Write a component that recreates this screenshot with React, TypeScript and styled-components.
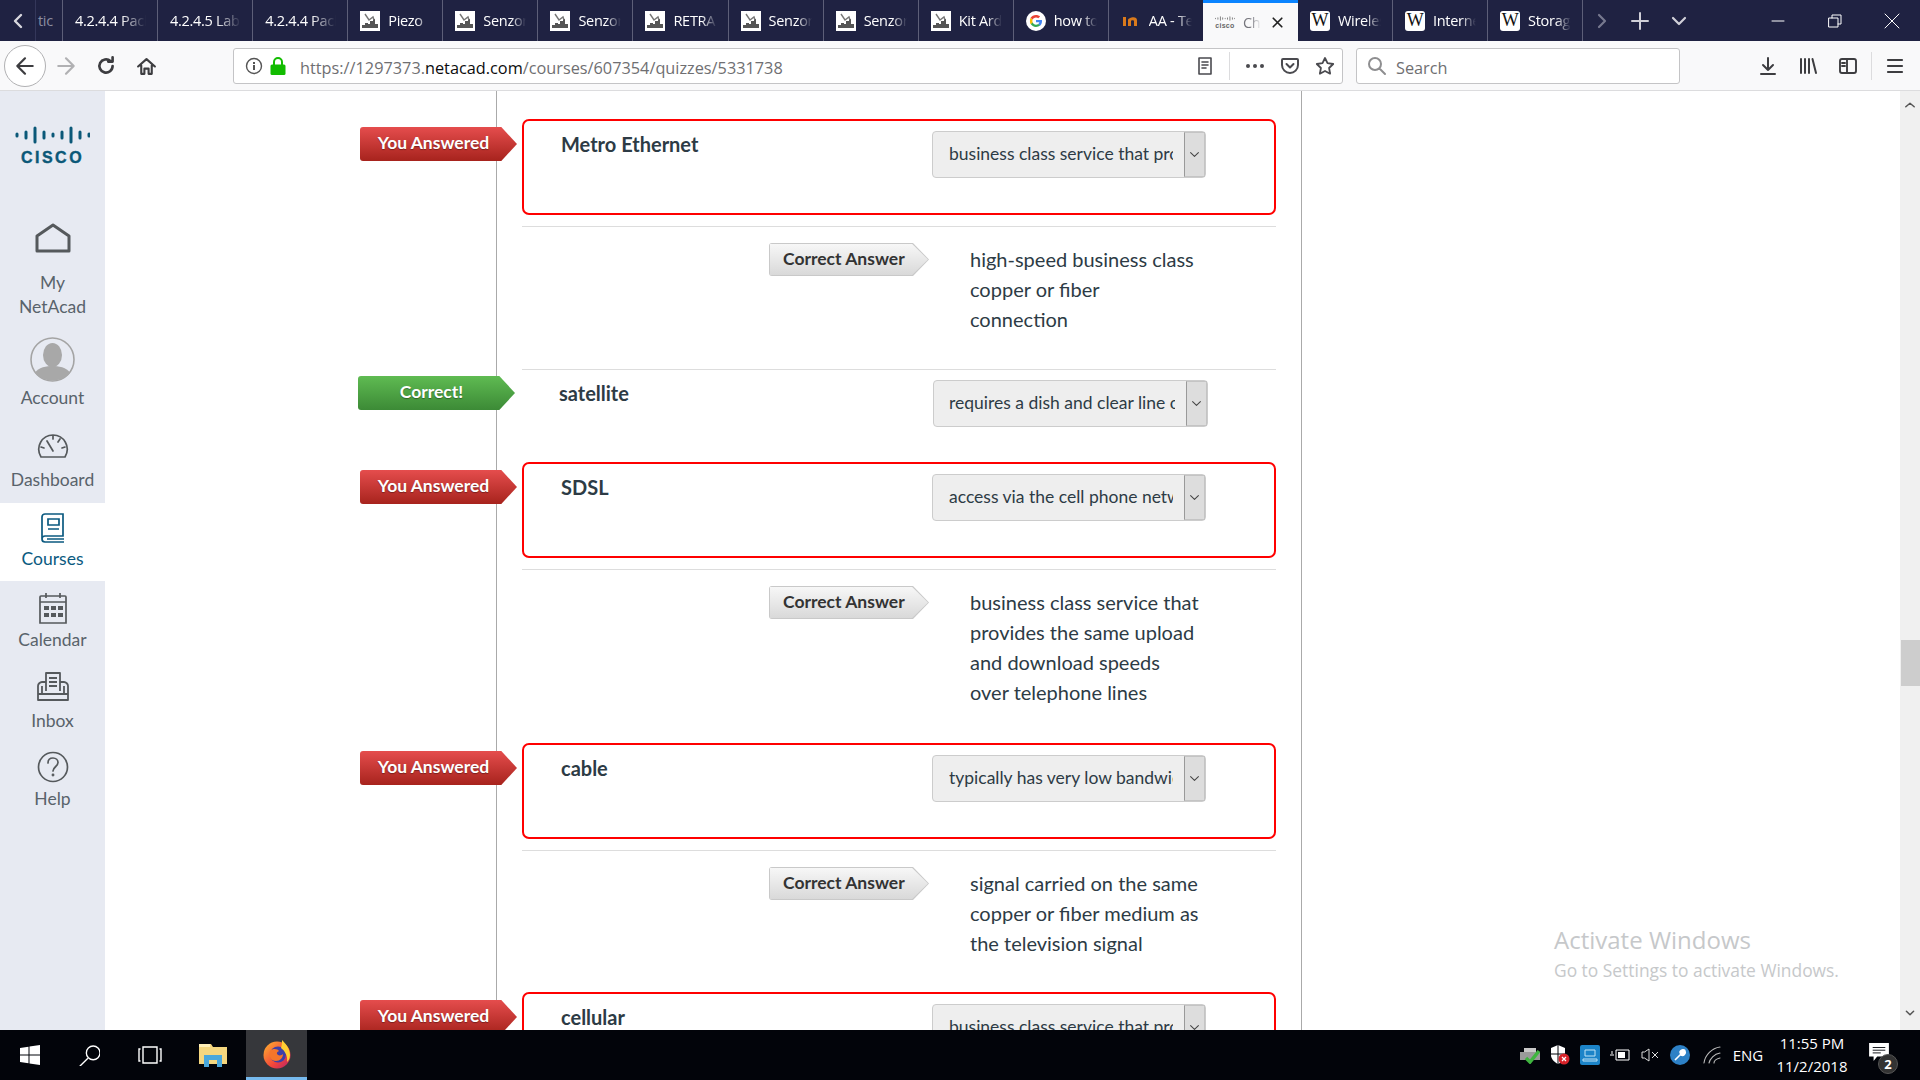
import React from 'react'
import styled, { createGlobalStyle } from 'styled-components'

const GlobalStyle = createGlobalStyle`
  html, body {
    margin: 0;
    padding: 0;
    background: #fff;
    overflow: hidden;
  }
  * {
    box-sizing: border-box;
  }
`

const Screen = styled.div`
  width: 1920px;
  height: 1080px;
  display: flex;
  flex-direction: column;
  overflow: hidden;
  font-family: Lato, 'Open Sans', sans-serif;
`

/* ---------- tab strip ---------- */

const TabStrip = styled.div`
  height: 41px;
  flex: none;
  display: flex;
  background: #1f2242;
  color: #fff;
  font-family: 'Open Sans', 'Noto Sans', sans-serif;
  font-size: 14.5px;
  letter-spacing: -0.3px;
`

const StripButton = styled.div<{ $w: number }>`
  width: ${(p) => p.$w}px;
  flex: none;
  display: flex;
  align-items: center;
  justify-content: center;
`

const PartialTab = styled.div`
  width: 28px;
  flex: none;
  display: flex;
  align-items: center;
  padding-left: 2px;
  overflow: hidden;
  border-right: 1px solid #5d5f78;
  border-left: 1px solid #34375a;
  color: #8b8da0;
`

const Tab = styled.div`
  width: 95.08px;
  flex: none;
  display: flex;
  align-items: center;
  gap: 8px;
  padding-left: 12px;
  padding-right: 11px;
  border-right: 1px solid #5d5f78;
  overflow: hidden;
`

const TabTitle = styled.span`
  flex: 1;
  min-width: 0;
  white-space: nowrap;
  overflow: hidden;
  -webkit-mask-image: linear-gradient(to right, #000 65%, transparent 100%);
  mask-image: linear-gradient(to right, #000 65%, transparent 100%);
`

const ActiveTab = styled.div`
  width: 95px;
  flex: none;
  display: flex;
  align-items: center;
  gap: 8px;
  padding: 0 12px;
  margin-left: -1px;
  background: #f9f9fa;
  border-top: 3px solid #0a84ff;
  color: #75757c;
`

const ActiveTitle = styled.span`
  width: 20px;
  white-space: nowrap;
  overflow: hidden;
  -webkit-mask-image: linear-gradient(to right, #000 40%, transparent 100%);
  mask-image: linear-gradient(to right, #000 40%, transparent 100%);
`

const WindowControls = styled.div`
  margin-left: auto;
  display: flex;
`

const FaviconBox = styled.span`
  width: 20px;
  height: 20px;
  flex: none;
  display: flex;
  flex-direction: column;
  align-items: center;
  justify-content: center;
`

const WikiBox = styled(FaviconBox)`
  background: #fff;
  border-radius: 3px;
  color: #111;
  font-family: 'Liberation Serif', serif;
  font-size: 18px;
`

const TinyCisco = styled.span`
  font-family: 'Liberation Sans', sans-serif;
  font-size: 7px;
  font-weight: 700;
  line-height: 8px;
  letter-spacing: 0.3px;
  color: #666;
`

/* ---------- toolbar ---------- */

const Toolbar = styled.div`
  height: 50px;
  flex: none;
  display: flex;
  align-items: center;
  padding: 1px 0 0 4px;
  background: #f9f9fa;
  border-bottom: 1px solid #dcdcde;
  font-family: 'Open Sans', 'Noto Sans', sans-serif;
`

const BackButton = styled.div`
  width: 42px;
  height: 42px;
  flex: none;
  display: flex;
  align-items: center;
  justify-content: center;
  background: #fff;
  border: 1px solid #b1b1b3;
  border-radius: 50%;
`

const ToolButton = styled.div`
  width: 40px;
  height: 40px;
  flex: none;
  display: flex;
  align-items: center;
  justify-content: center;
`

const Field = styled.div`
  height: 36px;
  flex: none;
  display: flex;
  align-items: center;
  background: #fff;
  border: 1px solid #c4c4c6;
  border-radius: 3px;
  font-size: 16.3px;
  color: #6f6f72;
`

const UrlBar = styled(Field)`
  width: 1110px;
  margin-left: 67px;
  padding-left: 11px;
`

const SearchBar = styled(Field)`
  width: 324px;
  margin-left: 13px;
  padding-left: 10px;
  gap: 9px;
`

const SearchLabel = styled.span`
  margin-top: 3px;
`

const UrlText = styled.span`
  margin: 3px 0 0 14px;
  white-space: nowrap;
  b {
    font-weight: 400;
    color: #0c0c0d;
  }
`

const UrlActions = styled.div`
  margin-left: auto;
  display: flex;
  align-items: center;
  height: 100%;
`

const UrlAction = styled.div`
  width: 35px;
  height: 100%;
  display: flex;
  align-items: center;
  justify-content: center;
`

const ToolSeparator = styled.div<{ $gap: number }>`
  width: 1px;
  height: 28px;
  flex: none;
  margin: 0 ${(p) => p.$gap}px;
  background: #dcdcde;
`

const ToolSpacer = styled.div`
  width: 68px;
  flex: none;
`

/* ---------- sidebar ---------- */

const Body = styled.div`
  flex: 1;
  min-height: 0;
  display: flex;
`

const Sidebar = styled.nav`
  width: 105px;
  flex: none;
  display: flex;
  flex-direction: column;
  background: #e7eaf2;
  color: #59636b;
  font-size: 17.5px;
  line-height: 24px;
  text-align: center;
`

const LogoBlock = styled.div`
  height: 124px;
  flex: none;
  display: flex;
  flex-direction: column;
  align-items: center;
  padding-top: 33px;
`

const LogoWord = styled.div`
  margin-top: 6px;
  font-family: 'Liberation Sans', sans-serif;
  font-weight: 700;
  font-size: 16px;
  line-height: 12px;
  letter-spacing: 2.5px;
  -webkit-text-stroke: 0.4px #0b5878;
  color: #0b5878;
`

const NavItem = styled.div<{ $h: number; $top: number; $active?: boolean }>`
  height: ${(p) => p.$h}px;
  flex: none;
  display: flex;
  flex-direction: column;
  align-items: center;
  padding-top: ${(p) => p.$top}px;
  background: ${(p) => (p.$active ? '#fff' : 'transparent')};
  color: ${(p) => (p.$active ? '#0b5a80' : 'inherit')};
`

const NavLabel = styled.div<{ $gap: number }>`
  margin-top: ${(p) => p.$gap}px;
`

/* ---------- quiz ---------- */

const Content = styled.main`
  flex: 1;
  min-width: 0;
  position: relative;
  overflow: hidden;
  background: #fff;
`

const QuizColumn = styled.div`
  width: 806px;
  min-height: 100%;
  margin-left: 391px;
  padding: 28px 25px 0;
  border-left: 1px solid #aaa;
  border-right: 1px solid #aaa;
  color: #2d3b45;
`

const WrongBox = styled.div`
  position: relative;
  height: 96px;
  display: flex;
  align-items: flex-start;
  border: 2px solid #f00;
  border-radius: 7px;
  background: #fff;
`

const RightBox = styled.div`
  position: relative;
  height: 93px;
  display: flex;
  align-items: flex-start;
  border-top: 1px solid #ddd;
`

const AnswerLabel = styled.div<{ $w: number }>`
  width: ${(p) => p.$w}px;
  flex: none;
  padding: 11px 0 0 37px;
  font-size: 20px;
  font-weight: 700;
  line-height: 24px;
`

const Select = styled.div<{ $w: number }>`
  width: ${(p) => p.$w}px;
  height: 47px;
  margin-top: 10px;
  flex: none;
  display: flex;
  background: #eee;
  border: 1px solid #ccc;
  border-radius: 4px;
  font-size: 17.5px;
`

const SelectText = styled.div<{ $left: number }>`
  flex: 1;
  min-width: 0;
  margin: 0 11px 0 ${(p) => p.$left}px;
  overflow: hidden;
  white-space: nowrap;
  line-height: 43px;
`

const SelectArrow = styled.div`
  width: 21px;
  flex: none;
  display: flex;
  align-items: center;
  justify-content: center;
  background: #ddd;
  border: 1px solid #c4c4c4;
  border-left-color: #999;
`

const Badge = styled.div`
  position: absolute;
  top: 6px;
  left: -164px;
  width: 157px;
  height: 34px;
  padding: 0 10px 4px 0;
  display: flex;
  align-items: center;
  justify-content: center;
  clip-path: polygon(0 0, 90% 0, 100% 50%, 90% 100%, 0 100%);
  border-radius: 3px 0 0 3px;
  color: #fff;
  font-size: 17.5px;
  font-weight: 700;
  text-shadow: 0 1px 1px rgba(0, 0, 0, 0.35);
`

const WrongBadge = styled(Badge)`
  background: linear-gradient(#e54d4d, #a7231d);
`

const RightBadge = styled(Badge)`
  background: linear-gradient(#5fbb52, #3c8a36);
`

const CorrectRow = styled.div<{ $h: number }>`
  height: ${(p) => p.$h}px;
  margin-top: 11px;
  display: flex;
  align-items: flex-start;
  padding: 16px 0 0 247px;
  border-top: 1px solid #ddd;
`

const AnswerTag = styled.div`
  position: relative;
  width: 160px;
  height: 33px;
  flex: none;
  padding: 0 0 3px 14px;
  display: flex;
  align-items: center;
  clip-path: polygon(0 0, 90% 0, 100% 50%, 90% 100%, 0 100%);
  background: #c9c9c9;
  border-radius: 3px 0 0 3px;
  color: #333;
  font-size: 17.5px;
  font-weight: 700;
  &::before {
    content: '';
    position: absolute;
    inset: 1px;
    clip-path: polygon(0 0, 90% 0, 100% 50%, 90% 100%, 0 100%);
    background: linear-gradient(#f7f7f7, #d9d9d9);
  }
  span {
    position: relative;
  }
`

const AnswerText = styled.div`
  margin: 1px 0 0 41px;
  font-size: 20px;
  line-height: 30px;
  white-space: nowrap;
`

const Watermark = styled.div`
  position: absolute;
  left: 1449px;
  top: 832px;
  font-family: 'Open Sans', 'Noto Sans', sans-serif;
  color: #c6c8ca;
  font-size: 17.4px;
  line-height: 26px;
`

const WatermarkTitle = styled.div`
  font-size: 24px;
  line-height: 34px;
`

const ScrollTrack = styled.div`
  width: 20px;
  flex: none;
  display: flex;
  flex-direction: column;
  align-items: center;
  padding-top: 8px;
  background: #f0f0f0;
`

const ScrollThumb = styled.div`
  width: 19px;
  height: 46px;
  margin: 529px 0 0 1px;
  background: #cdcdcd;
`

const ScrollBottom = styled.div`
  margin-top: auto;
  padding-bottom: 8px;
`

/* ---------- task bar ---------- */

const Taskbar = styled.div`
  height: 50px;
  flex: none;
  display: flex;
  align-items: center;
  background: #02040a;
  color: #fff;
  font-family: 'Open Sans', 'Noto Sans', sans-serif;
  font-size: 15px;
`

const TaskSlot = styled.div<{ $w: number }>`
  width: ${(p) => p.$w}px;
  height: 100%;
  flex: none;
  display: flex;
  align-items: center;
  justify-content: center;
`

const TaskActive = styled(TaskSlot)`
  background: #36373b;
  border-bottom: 3px solid #76b9ed;
`

const TrayArea = styled.div`
  margin-left: auto;
  display: flex;
  align-items: center;
  height: 100%;
`

const Clock = styled.div`
  width: 88px;
  text-align: center;
  line-height: 23px;
`

const NoticeSlot = styled.div`
  position: relative;
  width: 64px;
  height: 100%;
  display: flex;
  align-items: center;
  padding: 0 0 6px 13px;
`

const NoticeCount = styled.span`
  position: absolute;
  top: 24px;
  left: 22px;
  width: 20px;
  height: 20px;
  border-radius: 50%;
  background: #333;
  border: 1px solid #555;
  font-size: 13px;
  font-weight: 700;
  line-height: 18px;
  text-align: center;
`

/* ---------- drawings ---------- */

const ChartFavicon = () => (
  <FaviconBox>
    <svg width='20' height='20' viewBox='0 0 20 20'>
      <rect width='20' height='20' fill='#fff' />
      <path d='M2 17v-3h3v3zM5 17v-5h3v5zM8 17v-4h2v4zM10 17v-7h3v7zM13 17v-9h2v9zM15 17v-4h3v4z' fill='#555' />
      <path d='M5 3l4 6 4-3 1 3' stroke='#777' strokeWidth='1.400' fill='none' />
    </svg>
  </FaviconBox>
)

const GoogleFavicon = () => (
  <FaviconBox>
    <svg width='20' height='20' viewBox='0 0 20 20'>
      <circle cx='10' cy='10' r='10' fill='#fff' />
      <path d='M16 10.200c0-.5 0-.9-.1-1.300H10v2.400h3.400c-.2.800-.6 1.400-1.300 1.900l2 1.500c1.200-1.100 1.900-2.700 1.900-4.500z' fill='#4285f4' />
      <path d='M10 16c1.600 0 3-.5 4.100-1.400l-2-1.500c-.5.400-1.200.600-2.100.600-1.600 0-2.900-1-3.400-2.500l-2 1.600C5.600 14.700 7.600 16 10 16z' fill='#34a853' />
      <path d='M6.600 11.600c-.3-.9-.3-2.300 0-3.200l-2-1.600c-.9 1.800-.9 4.600 0 6.400z' fill='#fbbc05' />
      <path d='M10 6.400c.9 0 1.700.3 2.300.9l1.800-1.800C13 4.500 11.600 4 10 4 7.600 4 5.600 5.300 4.600 6.800l2 1.600C7.100 7.400 8.400 6.400 10 6.400z' fill='#ea4335' />
    </svg>
  </FaviconBox>
)

const OrangeFavicon = () => (
  <FaviconBox>
    <svg width='20' height='20' viewBox='0 0 20 20'>
      <path d='M2 6h3v9H2zM7 15V9c0-2 6-4 8-2 1 1 1 2 1 3v5h-3v-5c0-1-3-1-3 0v5z' fill='#d97a1c' />
    </svg>
  </FaviconBox>
)

const CiscoMark = ({ w, h, color }: { w: number; h: number; color: string }) => {
  const bars = [5, 9, 17, 9, 5, 9, 17, 9, 5]
  return (
    <svg width={w} height={h} viewBox='0 0 75 22'>
      {bars.map((b, i) => (
        <rect key={i} x={i * 9 + 0.5} y={11 - b / 2} width='3' height={b} rx='1.500' fill={color} />
      ))}
    </svg>
  )
}

const Line = ({ d, color = '#4a4a4f', w = 2, size = 20, vb = 20 }: { d: string; color?: string; w?: number; size?: number; vb?: number }) => (
  <svg width={size} height={size} viewBox={`0 0 ${vb} ${vb}`} fill='none' stroke={color} strokeWidth={w} strokeLinecap='round' strokeLinejoin='round'>
    <path d={d} />
  </svg>
)

const Avatar = () => (
  <svg width='45' height='45' viewBox='0 0 45 45'>
    <circle cx='22.500' cy='22.500' r='21.500' fill='#e7eaf2' stroke='#a4a4a4' strokeWidth='1.600' />
    <ellipse cx='22.500' cy='18' rx='9.500' ry='12' fill='#a8a8a8' />
    <path d='M5 36c3-6 12-7 17.500-7S37 30 40 36c-4 5-11 7.500-17.500 7.500S9 41 5 36z' fill='#a8a8a8' />
  </svg>
)

const FirefoxIcon = () => (
  <svg width='30' height='30' viewBox='0 0 30 30'>
    <defs>
      <linearGradient id='fx' x1='0' y1='0' x2='1' y2='1'>
        <stop offset='0' stopColor='#ffb52e' />
        <stop offset='0.6' stopColor='#f2463a' />
        <stop offset='1' stopColor='#b5206c' />
      </linearGradient>
    </defs>
    <circle cx='15' cy='16' r='13.500' fill='url(#fx)' />
    <circle cx='16' cy='15.500' r='8' fill='#3d3fa8' />
    <path d='M20 1c3 3 8 8 8 15 0 4-2 6-3 7 1-6-2-11-6-14 1-3 1-6 1-8z' fill='#ffce32' />
    <path d='M8 12c3-3 8-2 9 0-2 1-3 2-1 4 2 1 4 0 5-1 0 4-3 7-7 7-5 0-8-5-6-10z' fill='#f5762b' />
  </svg>
)

const FolderIcon = () => (
  <svg width='28' height='24' viewBox='0 0 28 24'>
    <path d='M0 1h12l2 3h14v17H0z' fill='#f5d77f' />
    <path d='M0 1h11v3H0z' fill='#fff0b8' />
    <path d='M5 24V12h18v12h-5v-7h-8v7z' fill='#4aa8dc' />
  </svg>
)

/* ---------- data ---------- */

type TabIcon = 'none' | 'chart' | 'google' | 'orange'

const tabs: { title: string; icon: TabIcon }[] = [
  { title: '4.2.4.4 Pack', icon: 'none' },
  { title: '4.2.4.5 Lab', icon: 'none' },
  { title: '4.2.4.4 Pack', icon: 'none' },
  { title: 'Piezo', icon: 'chart' },
  { title: 'Senzor', icon: 'chart' },
  { title: 'Senzor', icon: 'chart' },
  { title: 'RETRA', icon: 'chart' },
  { title: 'Senzor', icon: 'chart' },
  { title: 'Senzor', icon: 'chart' },
  { title: 'Kit Ard', icon: 'chart' },
  { title: 'how to', icon: 'google' },
  { title: 'AA - Te', icon: 'orange' },
]

const wikiTabs = ['Wireless', 'Internet', 'Storage']

const tabIcon = (icon: TabIcon) => {
  if (icon === 'chart') return <ChartFavicon />
  if (icon === 'google') return <GoogleFavicon />
  if (icon === 'orange') return <OrangeFavicon />
  return null
}

const chevron = 'M4 7l6 6 6-6'

const SelectBox = ({ value, w, left = 16 }: { value: string; w: number; left?: number }) => (
  <Select $w={w}>
    <SelectText $left={left}>{value}</SelectText>
    <SelectArrow>
      <Line d={chevron} color='#444' w={1.600} size={13} />
    </SelectArrow>
  </Select>
)

const WrongAnswer = ({ label, value }: { label: string; value: string }) => (
  <WrongBox>
    <WrongBadge>You Answered</WrongBadge>
    <AnswerLabel $w={408}>{label}</AnswerLabel>
    <SelectBox value={value} w={274} />
  </WrongBox>
)

const CorrectAnswer = ({ h, lines }: { h: number; lines: string[] }) => (
  <CorrectRow $h={h}>
    <AnswerTag>
      <span>Correct Answer</span>
    </AnswerTag>
    <AnswerText>
      {lines.map((line) => (
        <div key={line}>{line}</div>
      ))}
    </AnswerText>
  </CorrectRow>
)

const App = () => {
  return (
    <Screen>
      <GlobalStyle />
      <TabStrip>
        <StripButton $w={35}>
          <Line d='M13 4l-6 6 6 6' color='#d8d8de' w={2.400} />
        </StripButton>
        <PartialTab>tic</PartialTab>
        {tabs.map((tab, i) => (
          <Tab key={i}>
            {tabIcon(tab.icon)}
            <TabTitle>{tab.title}</TabTitle>
          </Tab>
        ))}
        <ActiveTab>
          <FaviconBox>
            <CiscoMark w={20} h={7} color='#666' />
            <TinyCisco>cisco</TinyCisco>
          </FaviconBox>
          <ActiveTitle>Cha</ActiveTitle>
          <Line d='M5 5l10 10M15 5L5 15' color='#222' w={2} size={19} />
        </ActiveTab>
        {wikiTabs.map((title) => (
          <Tab key={title}>
            <WikiBox>W</WikiBox>
            <TabTitle>{title}</TabTitle>
          </Tab>
        ))}
        <StripButton $w={38}>
          <Line d='M7 4l6 6-6 6' color='#77798f' w={2.200} />
        </StripButton>
        <StripButton $w={38}>
          <Line d='M10 2v16M2 10h16' color='#d0d0d8' w={2} />
        </StripButton>
        <StripButton $w={40}>
          <Line d={chevron} color='#d0d0d8' w={2.200} />
        </StripButton>
        <WindowControls>
          <StripButton $w={57}>
            <Line d='M4 10h12' color='#fff' w={1} />
          </StripButton>
          <StripButton $w={57}>
            <Line d='M4 7h9v9H4zM7 7V4h9v9h-3' color='#fff' w={1} />
          </StripButton>
          <StripButton $w={57}>
            <Line d='M3 3l14 14M17 3L3 17' color='#fff' w={1} />
          </StripButton>
        </WindowControls>
      </TabStrip>

      <Toolbar>
        <BackButton>
          <Line d='M17 10H3M10 3l-7 7 7 7' color='#3d3d40' w={2} size={22} />
        </BackButton>
        <ToolButton>
          <Line d='M3 10h14M10 3l7 7-7 7' color='#b1b1b3' w={2} size={22} />
        </ToolButton>
        <ToolButton>
          <Line d='M16 10a6 6 0 1 1-2-4.500M16 2v4h-4' color='#3d3d40' w={2.400} size={22} />
        </ToolButton>
        <ToolButton>
          <Line d='M2 10l8-7 8 7M5 9v8h3v-5h4v5h3V9' color='#3d3d40' w={2} size={21} />
        </ToolButton>
        <UrlBar>
          <svg width='18' height='18' viewBox='0 0 18 18'>
            <circle cx='9' cy='9' r='7.500' fill='none' stroke='#555' strokeWidth='1.400' />
            <rect x='8' y='8' width='2' height='5' fill='#555' />
            <rect x='8' y='5' width='2' height='2' fill='#555' />
          </svg>
          <svg width='16' height='18' viewBox='0 0 16 18' style={{ marginLeft: 7 }}>
            <path d='M4 8V5a4 4 0 0 1 8 0v3' fill='none' stroke='#12bc00' strokeWidth='2' />
            <rect x='0.500' y='7.500' width='15' height='10.500' rx='1.500' fill='#12bc00' />
          </svg>
          <UrlText>
            https://1297373.<b>netacad.com</b>/courses/607354/quizzes/5331738
          </UrlText>
          <UrlActions>
            <UrlAction>
              <Line d='M4 2h12v16H4zM7 6h6M7 9h6M7 12h4' color='#4a4a4f' w={1.600} />
            </UrlAction>
            <ToolSeparator $gap={7} />
            <UrlAction>
              <svg width='18' height='4' viewBox='0 0 18 4'>
                <circle cx='2' cy='2' r='2' fill='#4a4a4f' />
                <circle cx='9' cy='2' r='2' fill='#4a4a4f' />
                <circle cx='16' cy='2' r='2' fill='#4a4a4f' />
              </svg>
            </UrlAction>
            <UrlAction>
              <Line d='M3 3h14a1 1 0 0 1 1 1v5a8 8 0 0 1-16 0V4a1 1 0 0 1 1-1zM6.500 8l3.500 3.500L13.500 8' color='#4a4a4f' w={2} />
            </UrlAction>
            <UrlAction>
              <Line d='M10 2l2.500 5.200 5.700.800-4.100 4 1 5.700L10 15l-5.100 2.700 1-5.700-4.100-4 5.700-.800z' color='#4a4a4f' w={1.800} />
            </UrlAction>
          </UrlActions>
        </UrlBar>
        <SearchBar>
          <Line d='M12.500 12.500L18 18M14 8A6 6 0 1 1 2 8a6 6 0 0 1 12 0z' color='#8e8e90' w={2} />
          <SearchLabel>Search</SearchLabel>
        </SearchBar>
        <ToolSpacer />
        <ToolButton>
          <Line d='M10 2v12M5 9l5 5 5-5M3 18h14' color='#3d3d40' w={2} />
        </ToolButton>
        <ToolButton>
          <Line d='M3 3v14M7 3v14M11 3v14M14.500 3L18 17' color='#3d3d40' w={2} />
        </ToolButton>
        <ToolButton>
          <Line d='M4 3h12a2 2 0 0 1 2 2v10a2 2 0 0 1-2 2H4a2 2 0 0 1-2-2V5a2 2 0 0 1 2-2zM9 3v14M4 7h3M4 10h3' color='#3d3d40' w={1.900} />
        </ToolButton>
        <ToolSeparator $gap={3} />
        <ToolButton>
          <Line d='M3 4h14M3 10h14M3 16h14' color='#3d3d40' w={2.200} />
        </ToolButton>
      </Toolbar>

      <Body>
        <Sidebar>
          <LogoBlock>
            <CiscoMark w={75} h={22} color='#0b5878' />
            <LogoWord>CISCO</LogoWord>
          </LogoBlock>
          <NavItem $h={110} $top={8}>
            <svg width='36' height='30' viewBox='0 0 36 30' fill='none' stroke='#55595c' strokeWidth='3' strokeLinejoin='round'>
              <path d='M2 13L18 2l16 11v15H2z' />
            </svg>
            <NavLabel $gap={18}>
              My
              <br />
              NetAcad
            </NavLabel>
          </NavItem>
          <NavItem $h={99} $top={12}>
            <Avatar />
            <NavLabel $gap={4}>Account</NavLabel>
          </NavItem>
          <NavItem $h={79} $top={8}>
            <svg width='34' height='28' viewBox='0 0 34 28' fill='none' stroke='#55595c' strokeWidth='1.700' strokeLinecap='round'>
              <path d='M5 25C-1 15 6 3 17 3s18 12 12 22zM17 19L11 9M5 15l3 1M29 15l-3 1M17 3v4M24 7l-2 3' />
            </svg>
            <NavLabel $gap={8}>Dashboard</NavLabel>
          </NavItem>
          <NavItem $h={78} $top={10} $active>
            <svg width='26' height='30' viewBox='0 0 26 30' fill='none' stroke='#0b5a80' strokeWidth='1.700'>
              <path d='M5 1h18v22H5a3 3 0 0 0-3 3V4a3 3 0 0 1 3-3zM2 26a3 3 0 0 0 3 3h19M7 26h17M8 6h11v6H8zM8 16h11' />
            </svg>
            <NavLabel $gap={4}>Courses</NavLabel>
          </NavItem>
          <NavItem $h={86} $top={11}>
            <svg width='28' height='32' viewBox='0 0 28 32' fill='none' stroke='#55595c' strokeWidth='1.700'>
              <path d='M2 4h24a1 1 0 0 1 1 1v26H1V5a1 1 0 0 1 1-1zM1 10h26M7 1v5M21 1v5' />
              <path d='M5 14h5v4H5zM12 14h5v4h-5zM19 14h5v4h-5zM5 21h5v4H5zM12 21h5v4h-5zM19 21h5v4h-5z' fill='#55595c' stroke='none' />
            </svg>
            <NavLabel $gap={4}>Calendar</NavLabel>
          </NavItem>
          <NavItem $h={84} $top={5}>
            <svg width='32' height='30' viewBox='0 0 32 30' fill='none' stroke='#55595c' strokeWidth='1.800' strokeLinejoin='round'>
              <path d='M9 19V1h14v18M12 6h8M12 10h8M12 14h8' />
              <path d='M9 10H5c-2 0-4 2-4 4v14h30V14c0-2-2-4-4-4h-4M1 22h30M5 22v-8M27 22v-8' />
            </svg>
            <NavLabel $gap={7}>Inbox</NavLabel>
          </NavItem>
          <NavItem $h={70} $top={0}>
            <svg width='32' height='32' viewBox='0 0 32 32' fill='none' stroke='#55595c' strokeWidth='1.700' strokeLinecap='round'>
              <circle cx='16' cy='16' r='14.500' />
              <path d='M11 12c0-3 2-5 5-5s5 2 5 4.500c0 4-5 4.500-5 8.500' />
              <circle cx='16' cy='24' r='0.600' />
            </svg>
            <NavLabel $gap={4}>Help</NavLabel>
          </NavItem>
        </Sidebar>

        <Content>
          <QuizColumn>
            <WrongAnswer label='Metro Ethernet' value='business class service that provides the same upload' />
            <CorrectAnswer h={143} lines={['high-speed business class', 'copper or fiber', 'connection']} />
            <RightBox>
              <RightBadge>Correct!</RightBadge>
              <AnswerLabel $w={411}>satellite</AnswerLabel>
              <SelectBox value='requires a dish and clear line of sight' w={275} left={15} />
            </RightBox>
            <WrongAnswer label='SDSL' value='access via the cell phone network' />
            <CorrectAnswer
              h={174}
              lines={[
                'business class service that',
                'provides the same upload',
                'and download speeds',
                'over telephone lines',
              ]}
            />
            <WrongAnswer label='cable' value='typically has very low bandwidth' />
            <CorrectAnswer
              h={142}
              lines={['signal carried on the same', 'copper or fiber medium as', 'the television signal']}
            />
            <WrongAnswer label='cellular' value='business class service that provides the same upload' />
          </QuizColumn>
          <Watermark>
            <WatermarkTitle>Activate Windows</WatermarkTitle>
            Go to Settings to activate Windows.
          </Watermark>
        </Content>

        <ScrollTrack>
          <Line d='M3 13l7-6 7 6' color='#555' w={2.500} size={12} />
          <ScrollThumb />
          <ScrollBottom>
            <Line d={chevron} color='#555' w={2.500} size={12} />
          </ScrollBottom>
        </ScrollTrack>
      </Body>

      <Taskbar>
        <TaskSlot $w={60}>
          <svg width='20' height='20' viewBox='0 0 20 20' fill='#fff'>
            <path d='M0 3l8.500-1.200V9.500H0zM9.500 1.600L20 0v9.500H9.500zM0 10.500h8.500v7.700L0 17zM9.500 10.500H20V20L9.500 18.400z' />
          </svg>
        </TaskSlot>
        <TaskSlot $w={59}>
          <Line d='M8 13L1 20M20 7.500a6.500 6.500 0 1 1-13 0 6.500 6.500 0 0 1 13 0z' color='#fff' w={1.300} size={21} />
        </TaskSlot>
        <TaskSlot $w={61}>
          <svg width='24' height='18' viewBox='0 0 24 18' fill='none' stroke='#fff' strokeWidth='1.400'>
            <path d='M5 1h14v16H5zM2.500 3H1v12h1.500M21.500 3H23v12h-1.500' />
          </svg>
        </TaskSlot>
        <TaskSlot $w={66}>
          <FolderIcon />
        </TaskSlot>
        <TaskActive $w={61}>
          <FirefoxIcon />
        </TaskActive>
        <TrayArea>
          <TaskSlot $w={31}>
            <svg width='20' height='18' viewBox='0 0 20 18'>
              <path d='M0 6h20v8H0z' fill='#9a9a9a' />
              <path d='M4 2h12v4H4z' fill='#c8c8c8' />
              <path d='M6 12l4 4 9-11' stroke='#3fb53f' strokeWidth='3.500' fill='none' />
            </svg>
          </TaskSlot>
          <TaskSlot $w={30}>
            <svg width='20' height='20' viewBox='0 0 20 20'>
              <path d='M8 0l7 3v7c0 4-3 7-7 9-4-2-7-5-7-9V3z' fill='#fff' />
              <path d='M8 0v19M1 9h14' stroke='#02040a' strokeWidth='1' />
              <circle cx='14' cy='14' r='5.500' fill='#d8232a' />
              <path d='M12 12l4 4M16 12l-4 4' stroke='#fff' strokeWidth='1.200' />
            </svg>
          </TaskSlot>
          <TaskSlot $w={30}>
            <svg width='20' height='20' viewBox='0 0 20 20'>
              <rect width='20' height='20' rx='2' fill='#1c84c8' />
              <path d='M5 5h10v6H5zM3 14h14v2H3z' fill='none' stroke='#bfe3f5' strokeWidth='1' />
            </svg>
          </TaskSlot>
          <TaskSlot $w={30}>
            <svg width='20' height='14' viewBox='0 0 20 14' fill='none' stroke='#fff' strokeWidth='1'>
              <path d='M6 2h13v10H6zM0 7h4M2 3v3' />
              <rect x='8' y='4' width='7' height='6' fill='#fff' stroke='none' />
            </svg>
          </TaskSlot>
          <TaskSlot $w={30}>
            <svg width='18' height='14' viewBox='0 0 18 14' fill='none' stroke='#ddd' strokeWidth='1'>
              <path d='M1 4h2.500L8 1v12L3.500 10H1zM11 4l6 6M17 4l-6 6' />
            </svg>
          </TaskSlot>
          <TaskSlot $w={30}>
            <svg width='20' height='20' viewBox='0 0 20 20'>
              <circle cx='10' cy='10' r='10' fill='#2d81c6' />
              <path d='M5 15l6-6M10 7a3 3 0 0 1 4-2l-2 2 1 1 2-2a3 3 0 0 1-4 4z' stroke='#fff' strokeWidth='1.600' fill='#fff' />
            </svg>
          </TaskSlot>
          <TaskSlot $w={33}>
            <Line d='M2 18C3 10 10 3 18 2M7 18c1-4 5-9 11-10M12 18c0-2 2-4 6-5' color='#bbb' w={1.100} />
          </TaskSlot>
          <TaskSlot $w={40}>ENG</TaskSlot>
          <Clock>
            11:55 PM
            <br />
            11/2/2018
          </Clock>
          <NoticeSlot>
            <svg width='20' height='18' viewBox='0 0 22 20'>
              <path d='M0 0h22v15H9l-4 5v-5H0z' fill='#fff' />
              <path d='M4 5h14M4 8h14M4 11h9' stroke='#02040a' strokeWidth='1' />
            </svg>
            <NoticeCount>2</NoticeCount>
          </NoticeSlot>
        </TrayArea>
      </Taskbar>
    </Screen>
  )
}

export default App
